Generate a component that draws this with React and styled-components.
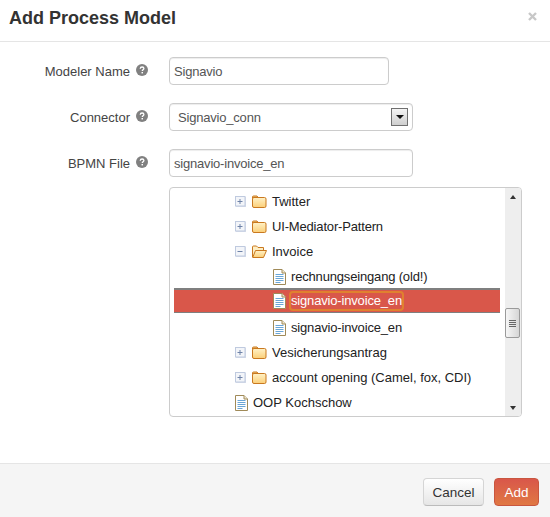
import React from "react";
import styled, { createGlobalStyle } from "styled-components";

const Global = createGlobalStyle`
  html, body { margin: 0; padding: 0; background: #fff; }
  body { font-family: "Liberation Sans", Arial, sans-serif; font-size: 13px; color: #333; }
`;

const Modal = styled.div`
  width: 550px;
  height: 517px;
  display: flex;
  flex-direction: column;
  background: #fff;
  overflow: hidden;
`;
const Header = styled.header`
  height: 41px;
  flex: none;
  border-bottom: 1px solid #e5e5e5;
  display: flex;
  align-items: center;
  justify-content: space-between;
  padding: 0 13px 0 9px;
`;
const Title = styled.h3`
  margin: 0;
  font-size: 18px;
  line-height: 37px;
  font-weight: bold;
  color: #333;
  position: relative;
  top: -2px;
`;
const CloseIcon = styled.svg`
  width: 9px;
  height: 9px;
  display: block;
  position: relative;
  top: -4px;
`;
const Body = styled.div`
  flex: 1;
  padding: 15px 28px 0 0;
  display: flex;
  flex-direction: column;
`;
const Row = styled.div`
  display: grid;
  grid-template-columns: 148px 1fr;
  column-gap: 21px;
  align-items: center;
  height: 28px;
  margin-bottom: 18px;
`;
const Label = styled.label`
  display: flex;
  justify-content: flex-end;
  align-items: center;
  gap: 6px;
  color: #444;
  line-height: 20px;
  padding-top: 2px;
`;
const Help = styled.svg`
  width: 12px;
  height: 12px;
  flex: none;
  display: block;
  position: relative;
  top: -2px;
`;
const Field = styled.div`
  box-sizing: border-box;
  width: ${(p) => p.$w}px;
  height: 28px;
  border: 1px solid #ccc;
  border-radius: 4px;
  box-shadow: inset 0 1px 1px rgba(0, 0, 0, 0.075);
  background: #fff;
  display: flex;
  align-items: center;
  justify-content: space-between;
  padding: 0 4px 0 ${(p) => p.$pl}px;
  color: #555;
  letter-spacing: -0.2px;
  white-space: nowrap;
`;
const FieldText = styled.span`
  line-height: 20px;
  padding-top: 2px;
`;
const SelectButton = styled.span`
  box-sizing: border-box;
  width: 17px;
  height: 18px;
  border: 1px solid #707070;
  background: linear-gradient(#f4f4f4, #cfcfcf);
  display: flex;
  align-items: center;
  justify-content: center;
`;
const Tree = styled.div`
  box-sizing: border-box;
  margin: -8px 0 0 169px;
  width: 353px;
  height: 230px;
  border: 1px solid #ccc;
  border-radius: 4px;
  display: flex;
  overflow: hidden;
`;
const TreeList = styled.div`
  flex: 1;
  min-width: 0;
  padding: 1px 0 0 4px;
  display: flex;
  flex-direction: column;
`;
const TreeRow = styled.div`
  box-sizing: border-box;
  height: 25.2px;
  flex: none;
  display: flex;
  align-items: center;
  padding-left: ${(p) => p.$indent}px;
  color: #222;
  white-space: nowrap;
  margin-right: 5px;
  ${(p) =>
    p.$selected
      ? `background: #d9574a;
         border-top: 2px solid #7f7f7f;
         border-bottom: 1px solid #7f7f7f;
         padding-top: 1px;
         margin-top: -2px;
         margin-bottom: 2px;`
      : ""}
`;
const Toggle = styled.svg`
  width: 11px;
  height: 11px;
  flex: none;
  margin-right: 6px;
`;
const FolderIcon = styled.svg`
  width: 15px;
  height: 13px;
  flex: none;
  margin-right: 5px;
`;
const FileIcon = styled.svg`
  width: 13px;
  height: 16px;
  flex: none;
  margin-right: 5px;
`;
const Name = styled.span`
  line-height: 16px;
  letter-spacing: ${(p) => (p.$tight ? "-0.17px" : "0")};
  ${(p) =>
    p.$selected
      ? `color:#fff; outline:2px solid #e0812f; outline-offset:0; border-radius:2px;`
      : ""}
`;
const Scrollbar = styled.div`
  width: 16px;
  flex: none;
  background: #eeeeee;
  display: flex;
  flex-direction: column;
  align-items: center;
  justify-content: space-between;
  position: relative;
`;
const Arrow = styled.span`
  width: 0;
  height: 0;
  border-left: 3.5px solid transparent;
  border-right: 3.5px solid transparent;
  ${(p) =>
    p.$down
      ? "border-top: 4px solid #333; margin: 0 0 6px;"
      : "border-bottom: 4px solid #333; margin: 7px 0 0;"}
`;
const Thumb = styled.div`
  position: absolute;
  left: 0;
  top: 120px;
  box-sizing: border-box;
  width: 15px;
  height: 30px;
  border: 1px solid #9a9a9a;
  border-radius: 2px;
  background: linear-gradient(90deg, #f6f6f6, #d6d6d6);
  display: flex;
  flex-direction: column;
  align-items: center;
  justify-content: center;
  gap: 1px;
`;
const Grip = styled.span`
  width: 7px;
  height: 1px;
  background: #666;
`;
const Footer = styled.footer`
  height: 54px;
  flex: none;
  box-sizing: border-box;
  background: #f5f5f5;
  border-top: 1px solid #e5e5e5;
  display: flex;
  justify-content: flex-end;
  align-items: flex-start;
  gap: 10px;
  padding: 14px 11px 0 0;
`;
const Button = styled.button`
  box-sizing: border-box;
  width: ${(p) => p.$w}px;
  height: 28px;
  border-radius: 4px;
  font: 13.5px "Liberation Sans", Arial, sans-serif;
  padding: 0;
  ${(p) =>
    p.$primary
      ? `color:#fff; border:1px solid #c9563f; background:linear-gradient(#d9574a,#e07843);`
      : `color:#333; border:1px solid #d5d5d5; border-bottom-color:#bbb; background:linear-gradient(#fff,#e6e6e6);`}
`;

const HelpIcon = () => (
  <Help viewBox="0 0 12 12">
    <circle cx="6" cy="6" r="6" fill="#808080" />
    <path d="M4.200 4.700C4.300 3.600 5 3 6.100 3c1.100 0 1.800.6 1.800 1.500 0 .7-.4 1-1 1.400-.5.3-.6.5-.6 1" fill="none" stroke="#fff" strokeWidth="1.300" />
    <rect x="5.500" y="8" width="1.500" height="1.400" fill="#fff" />
  </Help>
);

const ToggleIcon = ({ open }) => (
  <Toggle viewBox="0 0 11 11">
    <rect x="1" y="1" width="10" height="10" fill="#d8deea" />
    <rect x="0.500" y="0.500" width="9.500" height="9.500" fill="#f3f5f9" stroke="#bfcadf" />
    <path d={open ? "M2.500 5.500h5" : "M2.500 5.500h5M5 3v5"} stroke="#6f83a8" strokeWidth="1" />
  </Toggle>
);

const Folder = ({ open, id }) => (
  <FolderIcon viewBox="0 0 15 13">
    <defs>
      <linearGradient id={id} x1="0" y1="0" x2="0" y2="1">
        <stop offset="0" stopColor="#fff2c8" />
        <stop offset="1" stopColor="#fbcf78" />
      </linearGradient>
    </defs>
    {open ? (
      <>
        <path d="M.5 12V2a1 1 0 0 1 1-1h3l1.500 1.500h5.500v2.500" fill="#fdeec4" stroke="#c9781f" />
        <path d="M.7 12.500 3.500 5.500h11l-3 7z" fill={`url(#${id})`} stroke="#c9781f" />
      </>
    ) : (
      <>
        <path d="M.5 3V2a1 1 0 0 1 1-1h3.500l1.500 2z" fill="#f3c878" stroke="#c9781f" />
        <rect x="0.500" y="2.500" width="13.500" height="10" rx="1.500" fill={`url(#${id})`} stroke="#c9781f" />
      </>
    )}
  </FolderIcon>
);

const File = () => (
  <FileIcon viewBox="0 0 13 16">
    <path d="M.5.5h8.500l3.500 3.500v11.500H.5z" fill="#fff" stroke="#a08a58" />
    <path d="M9 .5V4h3.500" fill="#f1e9d0" stroke="#a08a58" />
    <path d="M2.500 5.500h8M2.500 7.500h8M2.500 9.500h8M2.500 11.500h8M2.500 13.500h5" stroke="#6aa6d6" strokeWidth="1" />
  </FileIcon>
);

const items = [
  { name: "Twitter", indent: 61, type: "closed" },
  { name: "UI-Mediator-Pattern", indent: 61, type: "closed", tight: true },
  { name: "Invoice", indent: 61, type: "open" },
  { name: "rechnungseingang (old!)", indent: 99, type: "file", tight: true },
  { name: "signavio-invoice_en", indent: 99, type: "file", selected: true, tight: true },
  { name: "signavio-invoice_en", indent: 99, type: "file", tight: true },
  { name: "Vesicherungsantrag", indent: 61, type: "closed" },
  { name: "account opening (Camel, fox, CDI)", indent: 61, type: "closed" },
  { name: "OOP Kochschow", indent: 61, type: "file" },
];

export default function App() {
  return (
    <Modal>
      <Global />
      <Header>
        <Title>Add Process Model</Title>
        <CloseIcon viewBox="0 0 9 9">
          <path d="M1 1l7 7M8 1l-7 7" stroke="#c8c8c8" strokeWidth="2.400" />
        </CloseIcon>
      </Header>
      <Body>
        <Row>
          <Label>Modeler Name <HelpIcon /></Label>
          <Field $w={220} $pl={4}><FieldText>Signavio</FieldText></Field>
        </Row>
        <Row>
          <Label>Connector <HelpIcon /></Label>
          <Field $w={244} $pl={8}>
            <FieldText>Signavio_conn</FieldText>
            <SelectButton>
              <svg width="8" height="4" viewBox="0 0 8 4"><path d="M0 0h8L4 4z" fill="#111" /></svg>
            </SelectButton>
          </Field>
        </Row>
        <Row>
          <Label>BPMN File <HelpIcon /></Label>
          <Field $w={244} $pl={4}><FieldText>signavio-invoice_en</FieldText></Field>
        </Row>
        <Tree>
          <TreeList>
            {items.map((it, i) => (
              <TreeRow key={i} $indent={it.indent} $selected={it.selected}>
                {it.type !== "file" && <ToggleIcon open={it.type === "open"} />}
                {it.type !== "file" && <Folder open={it.type === "open"} id={`folder-${i}`} />}
                {it.type === "file" && <File />}
                <Name $selected={it.selected} $tight={it.tight}>{it.name}</Name>
              </TreeRow>
            ))}
          </TreeList>
          <Scrollbar>
            <Arrow />
            <Thumb><Grip /><Grip /><Grip /><Grip /></Thumb>
            <Arrow $down />
          </Scrollbar>
        </Tree>
      </Body>
      <Footer>
        <Button $w={61}>Cancel</Button>
        <Button $w={45} $primary>Add</Button>
      </Footer>
    </Modal>
  );
}
